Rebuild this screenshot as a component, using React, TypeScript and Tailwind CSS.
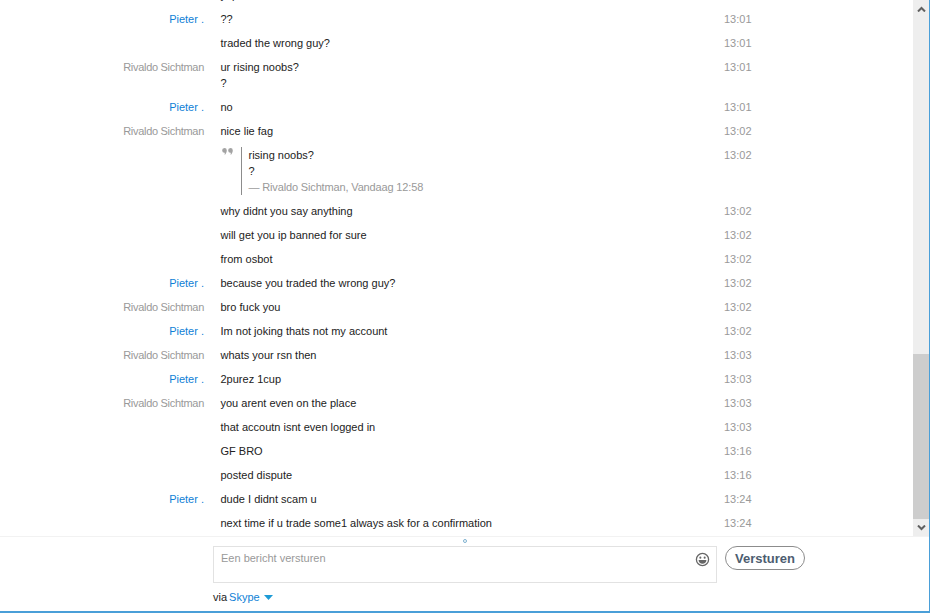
const font = "font-['Liberation_Sans',sans-serif]"

type Msg = {
  name?: string
  me?: boolean
  lines: string[]
  time: string
}

const before: Msg[] = [
  { name: 'Pieter .', me: true, lines: ['??'], time: '13:01' },
  { lines: ['traded the wrong guy?'], time: '13:01' },
  { name: 'Rivaldo Sichtman', lines: ['ur rising noobs?', '?'], time: '13:01' },
  { name: 'Pieter .', me: true, lines: ['no'], time: '13:01' },
  { name: 'Rivaldo Sichtman', lines: ['nice lie fag'], time: '13:02' },
]

const after: Msg[] = [
  { lines: ['why didnt you say anything'], time: '13:02' },
  { lines: ['will get you ip banned for sure'], time: '13:02' },
  { lines: ['from osbot'], time: '13:02' },
  { name: 'Pieter .', me: true, lines: ['because you traded the wrong guy?'], time: '13:02' },
  { name: 'Rivaldo Sichtman', lines: ['bro fuck you'], time: '13:02' },
  { name: 'Pieter .', me: true, lines: ['Im not joking thats not my account'], time: '13:02' },
  { name: 'Rivaldo Sichtman', lines: ['whats your rsn then'], time: '13:03' },
  { name: 'Pieter .', me: true, lines: ['2purez 1cup'], time: '13:03' },
  { name: 'Rivaldo Sichtman', lines: ['you arent even on the place'], time: '13:03' },
  { lines: ['that accoutn isnt even logged in'], time: '13:03' },
  { lines: ['GF BRO'], time: '13:16' },
  { lines: ['posted dispute'], time: '13:16' },
  { name: 'Pieter .', me: true, lines: ['dude I didnt scam u'], time: '13:24' },
  { lines: ['next time if u trade some1 always ask for a confirmation'], time: '13:24' },
]

function Row({ msg }: { msg: Msg }) {
  return (
    <div className="flex py-1 leading-4">
      <div className={`w-[204px] shrink-0 text-right ${msg.me ? 'text-[#0f7fd6]' : 'tracking-[-0.3px] text-[#999999]'}`}>{msg.name}</div>
      <div className="ml-[16.5px] w-[503.5px] shrink-0 text-[#222222]">
        {msg.lines.map((l, i) => (
          <div key={i}>{l}</div>
        ))}
      </div>
      <div className="text-[#999999]">{msg.time}</div>
    </div>
  )
}

function Quote() {
  return (
    <div className="flex py-1 leading-4">
      <div className="ml-[222px] w-[19px] shrink-0">
        <svg width="11" height="7" viewBox="0 0 11 7" className="mt-[1px]" fill="#a3a3a3">
          <path d="M2.4 0a2.4 2.4 0 0 1 2.4 2.4c0 1.8-1 3.4-2.2 4.6 .2-.8 .2-1.4 .1-2.2A2.4 2.4 0 0 1 2.4 0z" />
          <path d="M8.4 0a2.4 2.4 0 0 1 2.4 2.4c0 1.8-1 3.4-2.2 4.6 .2-.8 .2-1.4 .1-2.2A2.4 2.4 0 0 1 8.4 0z" />
        </svg>
      </div>
      <div className="w-[483px] shrink-0 border-l border-[#8c8c8c] pl-[6.5px] text-[#222222]">
        <div>rising noobs?</div>
        <div>?</div>
        <div className="tracking-[-0.15px] text-[#999999]">— Rivaldo Sichtman, Vandaag 12:58</div>
      </div>
      <div className="text-[#999999]">13:02</div>
    </div>
  )
}

export default function App() {
  return (
    <div className={`flex h-[613px] w-[930px] flex-col overflow-hidden border-r border-b-2 border-[#4a9fd8] bg-white text-[11px] ${font}`}>
      <div className="flex h-[537px] shrink-0 border-b border-[#f2f2f2]">
        <div className="min-w-0 flex-1 overflow-hidden">
          <div className="-mt-[17px]">
            <Row msg={{ lines: ['yup'], time: '' }} />
            {before.map((m, i) => (
              <Row key={i} msg={m} />
            ))}
            <Quote />
            {after.map((m, i) => (
              <Row key={i} msg={m} />
            ))}
          </div>
        </div>
        <div className="flex w-[16px] shrink-0 flex-col bg-[#eeeeee]">
          <div className="flex h-[17px] items-center justify-center">
            <svg width="9" height="6" viewBox="0 0 9 6" fill="none" stroke="#606060" strokeWidth="2">
              <path d="M1 5.5l3.5-3.5 3.5 3.5" />
            </svg>
          </div>
          <div className="flex-1" />
          <div className="h-[165px] bg-[#cdcdcd]" />
          <div className="flex h-[17px] items-center justify-center">
            <svg width="9" height="6" viewBox="0 0 9 6" fill="none" stroke="#606060" strokeWidth="2">
              <path d="M1 .5l3.5 3.5 3.5-3.5" />
            </svg>
          </div>
        </div>
      </div>
      <div className="relative flex-1">
        <div className="absolute left-[463px] top-[2px] size-[4px] rounded-full border border-[#7fb2d0]" />
        <div className="ml-[213px] mt-[9px] flex items-start">
          <div className="relative h-[37px] w-[504px] border border-[#e2e2e2] px-[7px] pt-[3px] leading-4 text-[#999999]">
            Een bericht versturen
            <svg width="15" height="15" viewBox="0 0 16 16" className="absolute right-[6px] top-[5px]">
              <circle cx="8" cy="8" r="6.5" fill="none" stroke="#666666" strokeWidth="1.4" />
              <circle cx="5.7" cy="6" r="1.1" fill="#666666" />
              <circle cx="10.3" cy="6" r="1.1" fill="#666666" />
              <path d="M3.8 8.6h8.4c0 2.4-1.9 4-4.2 4s-4.2-1.6-4.2-4z" fill="#666666" />
            </svg>
          </div>
          <button className="ml-[8px] h-[24px] w-[80px] rounded-full border border-[#8c8c8c] bg-white text-[13px] leading-none font-bold text-[#4d5d70]">
            Versturen
          </button>
        </div>
        <div className="ml-[213px] mt-[6px] flex items-center leading-4 text-[#222222]">
          via
          <span className="ml-[2px] text-[#0f7fd6]">Skype</span>
          <svg width="9" height="5" viewBox="0 0 9 5" className="ml-[4px]" fill="#1d9bd6">
            <path d="M0 0h9L4.5 5z" />
          </svg>
        </div>
      </div>
    </div>
  )
}
